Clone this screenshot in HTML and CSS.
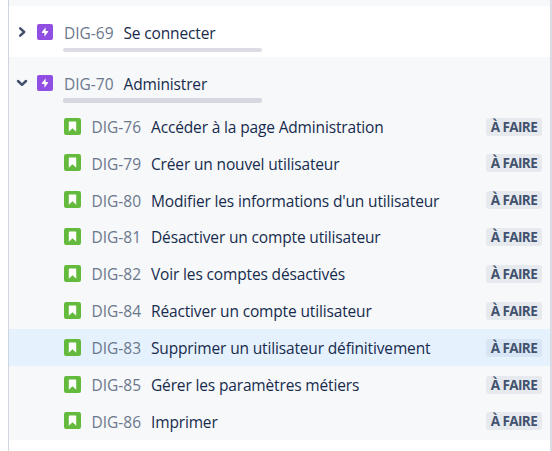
FILE: index.html
```
<!DOCTYPE html>
<html lang="fr">
<head>
<meta charset="utf-8">
<title>Backlog</title>
<link rel="stylesheet" href="styles.css">
</head>
<body>
<svg class="defs" aria-hidden="true">
  <symbol id="epic" viewBox="0 0 16 16"><rect width="16" height="16" rx="2" fill="#904ee2"/><path d="M8.6 3.2 4.8 8.2q-.3.7.4.7H7.4v3.9L11.2 7.8q.3-.7-.4-.7H8.6z" fill="#fff"/></symbol>
  <symbol id="story" viewBox="0 0 16 16"><rect width="16" height="16" rx="2" fill="#63ba3c"/><path d="M5 3.4h6q.5 0 .5.5v9L8 9.6l-3.5 3.3v-9q0-.5.5-.5z" fill="#fff"/></symbol>
</svg>
<main class="panel">
  <div class="strip"></div>
  <section class="epic epic-closed">
    <div class="epic-line"><svg class="chevron" viewBox="0 0 12 12"><path d="M4.2 2.3 8.2 6 4.2 9.7"/></svg><svg class="icon"><use href="#epic"/></svg><span class="key">DIG-69</span><span class="title">Se connecter</span></div>
    <div class="progress"></div>
  </section>
  <section class="epic epic-open">
    <div class="epic-line"><svg class="chevron" viewBox="0 0 12 12"><path d="M2 4 6 7.8 10 4"/></svg><svg class="icon"><use href="#epic"/></svg><span class="key">DIG-70</span><span class="title">Administrer</span></div>
    <div class="progress"></div>
  </section>
  <ul class="issues">
    <li><svg class="icon"><use href="#story"/></svg><span class="key">DIG-76</span><span class="title">Accéder à la page Administration</span><span class="status">À FAIRE</span></li>
    <li><svg class="icon"><use href="#story"/></svg><span class="key">DIG-79</span><span class="title">Créer un nouvel utilisateur</span><span class="status">À FAIRE</span></li>
    <li><svg class="icon"><use href="#story"/></svg><span class="key">DIG-80</span><span class="title">Modifier les informations d'un utilisateur</span><span class="status">À FAIRE</span></li>
    <li><svg class="icon"><use href="#story"/></svg><span class="key">DIG-81</span><span class="title">Désactiver un compte utilisateur</span><span class="status">À FAIRE</span></li>
    <li><svg class="icon"><use href="#story"/></svg><span class="key">DIG-82</span><span class="title">Voir les comptes désactivés</span><span class="status">À FAIRE</span></li>
    <li><svg class="icon"><use href="#story"/></svg><span class="key">DIG-84</span><span class="title">Réactiver un compte utilisateur</span><span class="status">À FAIRE</span></li>
    <li class="selected"><svg class="icon"><use href="#story"/></svg><span class="key">DIG-83</span><span class="title">Supprimer un utilisateur définitivement</span><span class="status">À FAIRE</span></li>
    <li><svg class="icon"><use href="#story"/></svg><span class="key">DIG-85</span><span class="title">Gérer les paramètres métiers</span><span class="status">À FAIRE</span></li>
    <li><svg class="icon"><use href="#story"/></svg><span class="key">DIG-86</span><span class="title">Imprimer</span><span class="status">À FAIRE</span></li>
  </ul>
</main>
</body>
</html>
```
FILE: styles.css
```
* { box-sizing: border-box; }
body { margin: 0; background: #fff; font-family: "Open Sans", "Noto Sans", sans-serif; font-size: 15.5px; color: #172b4d; overflow: hidden; }
.defs { display: none; }
.panel { margin-left: 8px; height: 451px; border-left: 1px solid #cfd5df; border-right: 2px solid #d9dbe4; }
.strip { height: 6px; background: #f6f8fa; }
.epic { height: 51px; padding-top: 16px; }
.epic-open { background: #f6f8fa; height: 51.2px; padding-top: 16px; }
.epic-line { display: flex; align-items: center; height: 21px; padding-left: 7px; line-height: 21px; white-space: nowrap; }
.chevron { width: 12px; height: 12px; flex: none; margin-top: -1px; fill: none; stroke: #42526e; stroke-width: 2.5; stroke-linecap: round; stroke-linejoin: round; }
.icon { width: 16px; height: 16px; flex: none; margin-top: -2px; }
.epic .icon { margin: -2px 11px 0 9px; }
.key { width: 59.5px; flex: none; color: #6b778c; letter-spacing: 0; }
.title { letter-spacing: -.15px; white-space: nowrap; }
.epic .key, .epic .title { padding-top: 1px; }
.issues .key, .issues .title { padding-top: 1.4px; }
.progress { width: 199px; height: 4px; margin: 5px 0 0 54px; border-radius: 2px; background: #dcdde4; }
.epic-open .progress { height: 5px; margin-top: 4px; background: #d6d8df; }
.issues { list-style: none; margin: 0; padding: 0; }
.issues li { display: flex; align-items: center; height: 36.86px; padding: 0 8px 0 55px; background: #f6f8fa; line-height: 21px; }
.issues li.selected { background: #e6f1fe; }
.issues .icon { width: 17px; height: 17px; margin: -1px 10.5px 0 0; }
.status { margin-left: auto; width: 56px; height: 18px; border-radius: 3px; background: #e6eaee; color: #42526e; font-size: 13.5px; font-weight: 700; line-height: 19px; text-align: center; letter-spacing: -.6px; white-space: nowrap; }
.selected .status { background: #d8e5f4; }
```
